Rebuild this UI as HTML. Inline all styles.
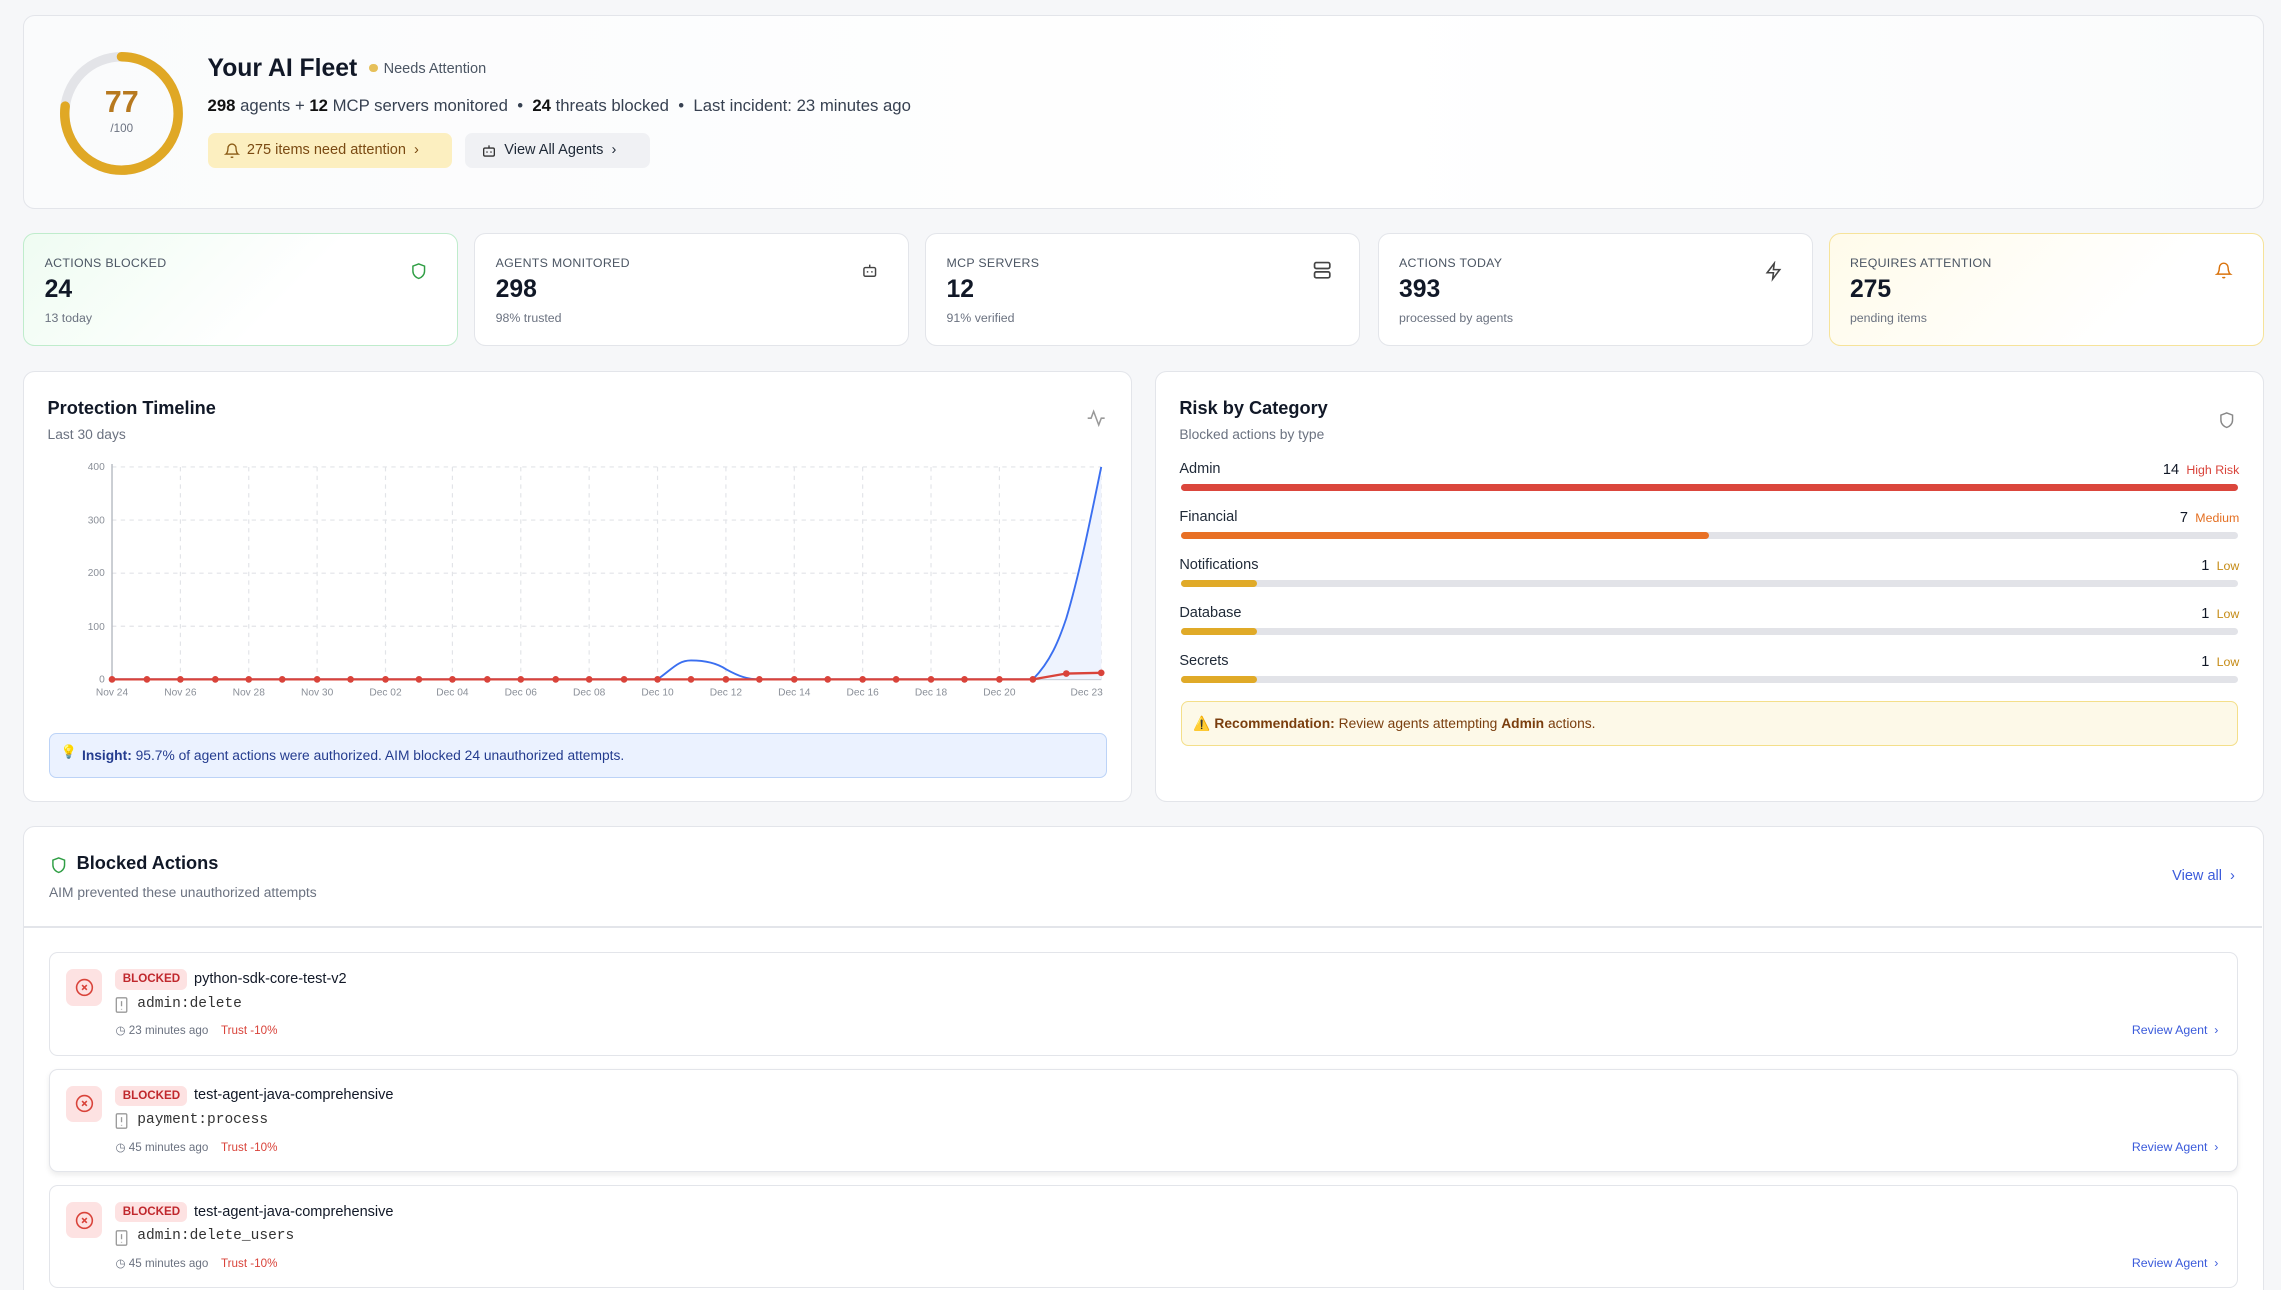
<!DOCTYPE html>
<html><head><meta charset="utf-8">
<style>
*{box-sizing:border-box;margin:0;padding:0}
html,body{width:2281px;height:1290px;overflow:hidden;background:#f6f7f9}
#w{zoom:1.45472;width:1568px;height:887px;position:relative;font-family:"Liberation Sans",sans-serif;color:#111827}
.card{position:absolute;background:#fff;border:1px solid #e3e5ea;border-radius:8px}
.abs{position:absolute;white-space:nowrap}
.lab{font-size:8.5px;color:#4b5563;letter-spacing:.2px}
.num{font-size:17px;font-weight:bold;color:#111827}
.sub{font-size:8.5px;color:#6b7280}
.bar{position:absolute;left:17px;right:17px;height:5px;border-radius:3px;background:#e2e3e8}
.bar i{display:block;height:5px;border-radius:3px}
.rl{font-size:10px;color:#1f2937}
.item{position:absolute;left:17px;width:1505px;height:71px;border:1px solid #e3e5ea;border-radius:6px;background:#fff}
.xb{position:absolute;left:11px;top:11px;width:25px;height:25px;background:#fde2e2;border-radius:5px}
.bd{position:absolute;left:45px;top:11px;height:14px;padding:0 5px;background:#fde2e2;color:#c0282d;font-size:8px;font-weight:bold;line-height:14px;border-radius:4px}
</style></head><body><div id="w">

<!-- header -->
<div class="card" style="left:16px;top:10px;width:1540px;height:134px;background:linear-gradient(90deg,#fafbfc,#fff 60%,#fafbfc)">
<svg class="abs" style="left:22px;top:22px" width="90" height="90" viewBox="0 0 90 90">
<circle cx="45" cy="45" r="39" fill="none" stroke="#e3e4e8" stroke-width="6.5"/>
<circle cx="45" cy="45" r="39" fill="none" stroke="#e0a825" stroke-width="6.5" stroke-dasharray="188.7 245" transform="rotate(-90 45 45)" stroke-linecap="round"/>
</svg>
<div class="abs" style="left:52px;top:48px;width:30px;text-align:center;font-size:21px;font-weight:bold;color:#b7791f">77</div>
<div class="abs" style="left:52px;top:73px;width:30px;text-align:center;font-size:8px;color:#6b7280">/100</div>
<div class="abs" style="left:126px;top:27px;font-size:17px;font-weight:bold">Your AI Fleet</div>
<div class="abs" style="left:237px;top:33px;width:6px;height:6px;border-radius:3px;background:#e6c05a"></div>
<div class="abs" style="left:247px;top:31px;font-size:10px;color:#4b5563">Needs Attention</div>
<div class="abs" style="left:126px;top:55px;font-size:11.5px;color:#374151"><b style="color:#111">298</b> agents + <b style="color:#111">12</b> MCP servers monitored &nbsp;•&nbsp; <b style="color:#111">24</b> threats blocked &nbsp;•&nbsp; Last incident: 23 minutes ago</div>
<div class="abs" style="left:126px;top:81px;width:168px;height:24px;background:#fcefc0;border-radius:5px;font-size:10px;color:#7a4a12;line-height:24px;padding-left:27px">275 items need attention &nbsp;›</div>
<svg class="abs" style="left:137px;top:87px" width="11" height="12" viewBox="0 0 24 24" fill="none" stroke="#8a5a14" stroke-width="2"><path d="M6 8a6 6 0 0 1 12 0c0 7 3 9 3 9H3s3-2 3-9M10.3 21a1.9 1.9 0 0 0 3.4 0"/></svg>
<div class="abs" style="left:303px;top:81px;width:127px;height:24px;background:#f0f1f4;border-radius:5px;font-size:10px;color:#1f2937;line-height:24px;padding-left:27px">View All Agents &nbsp;›</div>
<svg class="abs" style="left:314px;top:87px" width="11" height="12" viewBox="0 0 24 24" fill="none" stroke="#333" stroke-width="2"><rect x="4" y="8" width="16" height="12" rx="2"/><path d="M12 8V4M9 13v2M15 13v2"/></svg>
</div>

<!-- stats -->
<div class="card" style="left:16px;top:160px;width:299px;height:78px;border-color:#bfeccc;background:linear-gradient(135deg,#effcf2,#fff 60%)">
<div class="abs lab" style="left:14px;top:15px">ACTIONS BLOCKED</div><div class="abs num" style="left:14px;top:29px">24</div><div class="abs sub" style="left:14px;top:53px">13 today</div>
<svg class="abs" style="left:265px;top:19px" width="12" height="14" viewBox="0 0 24 24" fill="none" stroke="#2f9e44" stroke-width="2"><path d="M12 2l8 3v7c0 5-4 9-8 10-4-1-8-5-8-10V5z"/></svg></div>
<div class="card" style="left:326px;top:160px;width:299px;height:78px">
<div class="abs lab" style="left:14px;top:15px">AGENTS MONITORED</div><div class="abs num" style="left:14px;top:29px">298</div><div class="abs sub" style="left:14px;top:53px">98% trusted</div>
<svg class="abs" style="left:265px;top:19px" width="12" height="13" viewBox="0 0 24 24" fill="none" stroke="#444" stroke-width="2"><rect x="4" y="8" width="16" height="12" rx="2"/><path d="M12 8V4M9 13v2M15 13v2"/></svg></div>
<div class="card" style="left:636px;top:160px;width:299px;height:78px">
<div class="abs lab" style="left:14px;top:15px">MCP SERVERS</div><div class="abs num" style="left:14px;top:29px">12</div><div class="abs sub" style="left:14px;top:53px">91% verified</div>
<svg class="abs" style="left:265px;top:18px" width="14" height="14" viewBox="0 0 24 24" fill="none" stroke="#444" stroke-width="2"><rect x="3" y="3" width="18" height="7" rx="2"/><rect x="3" y="14" width="18" height="7" rx="2"/></svg></div>
<div class="card" style="left:947px;top:160px;width:299px;height:78px">
<div class="abs lab" style="left:14px;top:15px">ACTIONS TODAY</div><div class="abs num" style="left:14px;top:29px">393</div><div class="abs sub" style="left:14px;top:53px">processed by agents</div>
<svg class="abs" style="left:265px;top:19px" width="13" height="14" viewBox="0 0 24 24" fill="none" stroke="#444" stroke-width="2"><path d="M13 2L4 14h8l-1 8 9-12h-8z"/></svg></div>
<div class="card" style="left:1257px;top:160px;width:299px;height:78px;border-color:#f6e39a;background:linear-gradient(135deg,#fffbea,#fff 70%)">
<div class="abs lab" style="left:14px;top:15px">REQUIRES ATTENTION</div><div class="abs num" style="left:14px;top:29px">275</div><div class="abs sub" style="left:14px;top:53px">pending items</div>
<svg class="abs" style="left:265px;top:19px" width="12" height="13" viewBox="0 0 24 24" fill="none" stroke="#d9730d" stroke-width="2"><path d="M6 8a6 6 0 0 1 12 0c0 7 3 9 3 9H3s3-2 3-9M10.3 21a1.9 1.9 0 0 0 3.4 0"/></svg></div>

<!-- timeline -->
<div class="card" style="left:16px;top:255px;width:762px;height:296px">
<div class="abs" style="left:16px;top:18px;font-size:12.5px;font-weight:bold">Protection Timeline</div>
<div class="abs" style="left:16px;top:37px;font-size:9.5px;color:#6b7280">Last 30 days</div>
<svg class="abs" style="left:730px;top:25px" width="14" height="14" viewBox="0 0 24 24" fill="none" stroke="#999" stroke-width="1.8"><path d="M2 12h4l3-8 6 16 3-8h4"/></svg>
<div class="abs" style="left:17px;top:248px;width:727px;height:31px;background:#ebf2ff;border:1px solid #bcd3f7;border-radius:5px;font-size:9.5px;color:#243c8f;line-height:29px;padding-left:22px"><b>Insight:</b> 95.7% of agent actions were authorized. AIM blocked 24 unauthorized attempts.</div>
<div class="abs" style="left:25px;top:256px;font-size:9px">💡</div>
</div>
<svg class="abs" style="left:0;top:0" width="790" height="490">
<g stroke="#e2e4e8" stroke-dasharray="3 3" stroke-width="0.8">
<line x1="77" y1="321" x2="757" y2="321"/><line x1="77" y1="357.5" x2="757" y2="357.5"/><line x1="77" y1="394" x2="757" y2="394"/><line x1="77" y1="430.5" x2="757" y2="430.5"/>
<line x1="124" y1="321" x2="124" y2="467"/><line x1="171" y1="321" x2="171" y2="467"/><line x1="218" y1="321" x2="218" y2="467"/><line x1="265" y1="321" x2="265" y2="467"/><line x1="311" y1="321" x2="311" y2="467"/><line x1="358" y1="321" x2="358" y2="467"/><line x1="405" y1="321" x2="405" y2="467"/><line x1="452" y1="321" x2="452" y2="467"/><line x1="499" y1="321" x2="499" y2="467"/><line x1="546" y1="321" x2="546" y2="467"/><line x1="593" y1="321" x2="593" y2="467"/><line x1="640" y1="321" x2="640" y2="467"/><line x1="687" y1="321" x2="687" y2="467"/><line x1="757" y1="321" x2="757" y2="467"/>
</g>
<line x1="77" y1="319" x2="77" y2="467" stroke="#b8bcc4"/><line x1="77" y1="467" x2="757" y2="467" stroke="#b8bcc4"/>
<g font-size="7" fill="#8a8f98" font-family="Liberation Sans" text-anchor="end">
<text x="72" y="323">400</text><text x="72" y="360">300</text><text x="72" y="396">200</text><text x="72" y="433">100</text><text x="72" y="469">0</text></g>
<g font-size="7" fill="#8a8f98" font-family="Liberation Sans" text-anchor="middle">
<text x="77" y="478">Nov 24</text><text x="124" y="478">Nov 26</text><text x="171" y="478">Nov 28</text><text x="218" y="478">Nov 30</text><text x="265" y="478">Dec 02</text><text x="311" y="478">Dec 04</text><text x="358" y="478">Dec 06</text><text x="405" y="478">Dec 08</text><text x="452" y="478">Dec 10</text><text x="499" y="478">Dec 12</text><text x="546" y="478">Dec 14</text><text x="593" y="478">Dec 16</text><text x="640" y="478">Dec 18</text><text x="687" y="478">Dec 20</text><text x="747" y="478">Dec 23</text></g>
<path d="M710 467 C722 455 728 440 733 425 C742 395 750 355 757 321 L757 467Z" fill="#eef3fe"/>
<path d="M77 467 H452 C462 460 466 454 475 454 C485 454 493 456 499 460 C508 465 514 467 522 467 H710 C722 455 728 440 733 425 C742 395 750 355 757 321" fill="none" stroke="#3b6ff0" stroke-width="1.3"/>
<path d="M77 467 H710 L733 463 L757 462.5" fill="none" stroke="#d9433a" stroke-width="1.6"/>
<g fill="#d9433a">
<circle cx="77" cy="467" r="2.3"/><circle cx="101" cy="467" r="2.3"/><circle cx="124" cy="467" r="2.3"/><circle cx="148" cy="467" r="2.3"/><circle cx="171" cy="467" r="2.3"/><circle cx="194" cy="467" r="2.3"/><circle cx="218" cy="467" r="2.3"/><circle cx="241" cy="467" r="2.3"/><circle cx="265" cy="467" r="2.3"/><circle cx="288" cy="467" r="2.3"/><circle cx="311" cy="467" r="2.3"/><circle cx="335" cy="467" r="2.3"/><circle cx="358" cy="467" r="2.3"/><circle cx="382" cy="467" r="2.3"/><circle cx="405" cy="467" r="2.3"/><circle cx="429" cy="467" r="2.3"/><circle cx="452" cy="467" r="2.3"/><circle cx="475" cy="467" r="2.3"/><circle cx="499" cy="467" r="2.3"/><circle cx="522" cy="467" r="2.3"/><circle cx="546" cy="467" r="2.3"/><circle cx="569" cy="467" r="2.3"/><circle cx="593" cy="467" r="2.3"/><circle cx="616" cy="467" r="2.3"/><circle cx="640" cy="467" r="2.3"/><circle cx="663" cy="467" r="2.3"/><circle cx="687" cy="467" r="2.3"/><circle cx="710" cy="467" r="2.3"/><circle cx="733" cy="463" r="2.3"/><circle cx="757" cy="462.5" r="2.3"/></g>
</svg>

<!-- risk -->
<div class="card" style="left:794px;top:255px;width:762px;height:296px">
<div class="abs" style="left:16px;top:18px;font-size:12.5px;font-weight:bold">Risk by Category</div>
<div class="abs" style="left:16px;top:37px;font-size:9.5px;color:#6b7280">Blocked actions by type</div>
<svg class="abs" style="left:730px;top:26px" width="12" height="14" viewBox="0 0 24 24" fill="none" stroke="#888" stroke-width="2"><path d="M12 2l8 3v7c0 5-4 9-8 10-4-1-8-5-8-10V5z"/></svg>
<div class="abs rl" style="left:16px;top:61px">Admin</div><div class="abs" style="right:16px;top:62px;font-size:9px"><span style="font-size:10px">14</span>&nbsp; <span style="color:#d9433a;font-size:8.5px">High Risk</span></div>
<div class="bar" style="top:77px"><i style="width:100%;background:#db463c"></i></div>
<div class="abs rl" style="left:16px;top:94px">Financial</div><div class="abs" style="right:16px;top:95px;font-size:9px"><span style="font-size:10px">7</span>&nbsp; <span style="color:#e46f22;font-size:8.5px">Medium</span></div>
<div class="bar" style="top:110px"><i style="width:50%;background:#e87025"></i></div>
<div class="abs rl" style="left:16px;top:127px">Notifications</div><div class="abs" style="right:16px;top:128px;font-size:9px"><span style="font-size:10px">1</span>&nbsp; <span style="color:#c58b16;font-size:8.5px">Low</span></div>
<div class="bar" style="top:143px"><i style="width:7.2%;background:#e0aa28"></i></div>
<div class="abs rl" style="left:16px;top:160px">Database</div><div class="abs" style="right:16px;top:161px;font-size:9px"><span style="font-size:10px">1</span>&nbsp; <span style="color:#c58b16;font-size:8.5px">Low</span></div>
<div class="bar" style="top:176px"><i style="width:7.2%;background:#e0aa28"></i></div>
<div class="abs rl" style="left:16px;top:193px">Secrets</div><div class="abs" style="right:16px;top:194px;font-size:9px"><span style="font-size:10px">1</span>&nbsp; <span style="color:#c58b16;font-size:8.5px">Low</span></div>
<div class="bar" style="top:209px"><i style="width:7.2%;background:#e0aa28"></i></div>
<div class="abs" style="left:17px;top:226px;width:727px;height:31px;background:#fdf9e8;border:1px solid #f4df8a;border-radius:5px;font-size:9.5px;color:#7a3e0e;line-height:29px;padding-left:8px">⚠️ <b>Recommendation:</b> Review agents attempting <b>Admin</b> actions.</div>
</div>

<!-- blocked -->
<div class="card" style="left:16px;top:568px;width:1540px;height:340px">
<svg class="abs" style="left:18px;top:19px" width="12" height="14" viewBox="0 0 24 24" fill="none" stroke="#2f9e44" stroke-width="2"><path d="M12 2l8 3v7c0 5-4 9-8 10-4-1-8-5-8-10V5z"/></svg>
<div class="abs" style="left:36px;top:18px;font-size:12.5px;font-weight:bold">Blocked Actions</div>
<div class="abs" style="left:17px;top:39px;font-size:9.5px;color:#6b7280">AIM prevented these unauthorized attempts</div>
<div class="abs" style="right:19px;top:28px;font-size:10px;color:#3b5bdb">View all &nbsp;›</div>
<div class="abs" style="left:0;top:68px;width:1538px;height:1px;background:#e3e5ea"></div>

<div class="item" style="top:86px">
<div class="xb"><svg style="position:absolute;left:6px;top:6px" width="13" height="13" viewBox="0 0 24 24" fill="none" stroke="#d9433a" stroke-width="2"><circle cx="12" cy="12" r="10"/><path d="M9 9l6 6M15 9l-6 6"/></svg></div>
<div class="bd">BLOCKED</div><div class="abs" style="left:99px;top:12px;font-size:10px">python-sdk-core-test-v2</div>
<svg class="abs" style="left:45px;top:30px" width="9" height="11" viewBox="0 0 10 12" fill="none" stroke="#999"><rect x="1" y="0.5" width="8" height="11" rx="1"/><path d="M5 3v4M5 9v.5"/></svg>
<div class="abs" style="left:60px;top:29px;font-size:10px;font-family:'Liberation Mono',monospace;color:#333">admin:delete</div>
<div class="abs" style="left:45px;top:48px;font-size:8px;color:#6b7280">◷ 23 minutes ago &nbsp;&nbsp; <span style="color:#d9433a">Trust -10%</span></div>
<div class="abs" style="right:13px;top:48px;font-size:8.5px;color:#3b5bdb">Review Agent &nbsp;›</div></div>

<div class="item" style="top:166px;box-shadow:0 2px 4px rgba(0,0,0,.08)">
<div class="xb"><svg style="position:absolute;left:6px;top:6px" width="13" height="13" viewBox="0 0 24 24" fill="none" stroke="#d9433a" stroke-width="2"><circle cx="12" cy="12" r="10"/><path d="M9 9l6 6M15 9l-6 6"/></svg></div>
<div class="bd">BLOCKED</div><div class="abs" style="left:99px;top:12px;font-size:10px">test-agent-java-comprehensive</div>
<svg class="abs" style="left:45px;top:30px" width="9" height="11" viewBox="0 0 10 12" fill="none" stroke="#999"><rect x="1" y="0.5" width="8" height="11" rx="1"/><path d="M5 3v4M5 9v.5"/></svg>
<div class="abs" style="left:60px;top:29px;font-size:10px;font-family:'Liberation Mono',monospace;color:#333">payment:process</div>
<div class="abs" style="left:45px;top:48px;font-size:8px;color:#6b7280">◷ 45 minutes ago &nbsp;&nbsp; <span style="color:#d9433a">Trust -10%</span></div>
<div class="abs" style="right:13px;top:48px;font-size:8.5px;color:#3b5bdb">Review Agent &nbsp;›</div></div>

<div class="item" style="top:246px">
<div class="xb"><svg style="position:absolute;left:6px;top:6px" width="13" height="13" viewBox="0 0 24 24" fill="none" stroke="#d9433a" stroke-width="2"><circle cx="12" cy="12" r="10"/><path d="M9 9l6 6M15 9l-6 6"/></svg></div>
<div class="bd">BLOCKED</div><div class="abs" style="left:99px;top:12px;font-size:10px">test-agent-java-comprehensive</div>
<svg class="abs" style="left:45px;top:30px" width="9" height="11" viewBox="0 0 10 12" fill="none" stroke="#999"><rect x="1" y="0.5" width="8" height="11" rx="1"/><path d="M5 3v4M5 9v.5"/></svg>
<div class="abs" style="left:60px;top:29px;font-size:10px;font-family:'Liberation Mono',monospace;color:#333">admin:delete_users</div>
<div class="abs" style="left:45px;top:48px;font-size:8px;color:#6b7280">◷ 45 minutes ago &nbsp;&nbsp; <span style="color:#d9433a">Trust -10%</span></div>
<div class="abs" style="right:13px;top:48px;font-size:8.5px;color:#3b5bdb">Review Agent &nbsp;›</div></div>
</div>

</div></body></html>
